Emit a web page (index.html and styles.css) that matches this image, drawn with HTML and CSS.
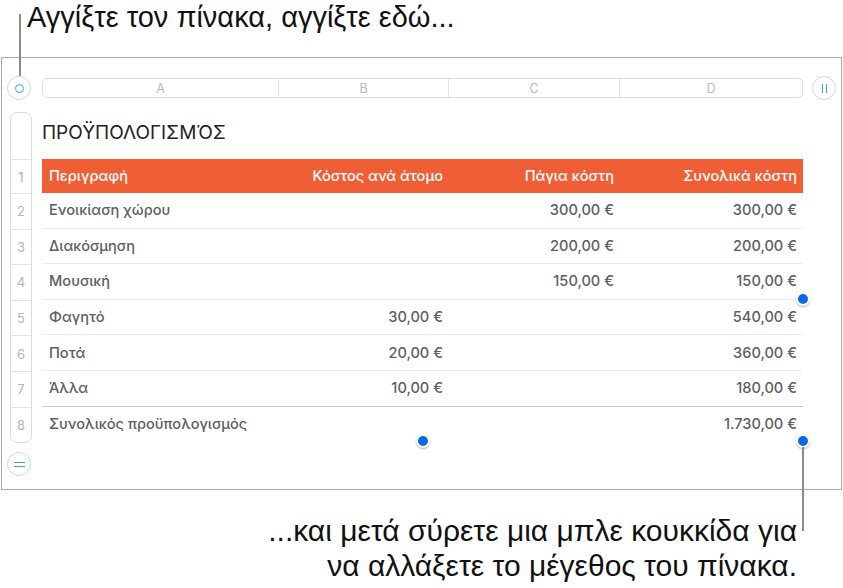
FILE: index.html
```html
<!DOCTYPE html>
<html lang="el">
<head>
<meta charset="utf-8">
<title>Πίνακας</title>
<link rel="stylesheet" href="styles.css">
</head>
<body>
<div class="page">
  <p class="caption caption-top">Αγγίξτε τον πίνακα, αγγίξτε εδώ...</p>

  <div class="frame">
    <div class="toolbar">
      <span class="circle-btn"><span class="ring"></span></span>
      <div class="colbar">
        <span class="colcell col-a">A</span>
        <span class="colcell col-b">B</span>
        <span class="colcell col-c">C</span>
        <span class="colcell col-d">D</span>
      </div>
      <span class="circle-btn"><span class="bars-v"></span></span>
    </div>

    <div class="sheet">
      <div class="rowbar">
        <span class="rowcell rowcell-top"></span>
        <span class="rowcell rowcell-head">1</span>
        <span class="rowcell">2</span>
        <span class="rowcell">3</span>
        <span class="rowcell">4</span>
        <span class="rowcell">5</span>
        <span class="rowcell">6</span>
        <span class="rowcell">7</span>
        <span class="rowcell">8</span>
      </div>

      <div class="tablewrap">
        <h2 class="title">ΠΡΟΫΠΟΛΟΓΙΣΜΌΣ</h2>
        <div class="grid">
          <div class="row head">
            <span class="cell left">Περιγραφή</span>
            <span class="cell">Κόστος ανά άτομο</span>
            <span class="cell">Πάγια κόστη</span>
            <span class="cell">Συνολικά κόστη</span>
          </div>
          <div class="row">
            <span class="cell left">Ενοικίαση χώρου</span>
            <span class="cell"></span>
            <span class="cell">300,00 €</span>
            <span class="cell">300,00 €</span>
          </div>
          <div class="row">
            <span class="cell left">Διακόσμηση</span>
            <span class="cell"></span>
            <span class="cell">200,00 €</span>
            <span class="cell">200,00 €</span>
          </div>
          <div class="row">
            <span class="cell left">Μουσική</span>
            <span class="cell"></span>
            <span class="cell">150,00 €</span>
            <span class="cell">150,00 €</span>
          </div>
          <div class="row">
            <span class="cell left">Φαγητό</span>
            <span class="cell">30,00 €</span>
            <span class="cell"></span>
            <span class="cell">540,00 €</span>
          </div>
          <div class="row">
            <span class="cell left">Ποτά</span>
            <span class="cell">20,00 €</span>
            <span class="cell"></span>
            <span class="cell">360,00 €</span>
          </div>
          <div class="row row-last-body">
            <span class="cell left">Άλλα</span>
            <span class="cell">10,00 €</span>
            <span class="cell"></span>
            <span class="cell">180,00 €</span>
          </div>
          <div class="row row-total">
            <span class="cell left">Συνολικός προϋπολογισμός</span>
            <span class="cell"></span>
            <span class="cell"></span>
            <span class="cell">1.730,00 €</span>
          </div>
        </div>

        <span class="dot dot-right-mid"></span>
        <span class="dot dot-bottom-mid"></span>
        <span class="dot dot-corner"></span>
      </div>
    </div>

    <span class="circle-btn add-row"><span class="bars-h"></span></span>
  </div>

  <p class="caption caption-bottom">...και μετά σύρετε μια μπλε κουκκίδα για<br>να αλλάξετε το μέγεθος του πίνακα.</p>

  <span class="leader leader-top"></span>
  <span class="leader leader-bottom"></span>
</div>
</body>
</html>
```

FILE: styles.css
```css
* { box-sizing: border-box; }

html, body {
  margin: 0;
  padding: 0;
  background: #ffffff;
}

.page {
  position: relative;
  width: 843px;
  height: 588px;
  overflow: hidden;
}

.caption {
  margin: 0;
  font-family: "Liberation Sans", Arial, sans-serif;
  font-size: 29px;
  color: #111111;
}

.caption-top {
  height: 57px;
  padding: 0 0 0 27px;
  line-height: 34px;
}

.caption-bottom {
  text-align: right;
  font-size: 30px;
  padding: 23px 46px 0 0;
  line-height: 35px;
}

.frame {
  margin-left: 1px;
  width: 841px;
  height: 433px;
  border: 1px solid #a9a9a9;
  padding-top: 18px;
  display: flex;
  flex-direction: column;
}

.toolbar {
  display: flex;
  align-items: center;
  height: 24px;
  padding-left: 5px;
}

.circle-btn {
  width: 24px;
  height: 24px;
  flex: none;
  border-radius: 50%;
  border: 1px solid #d6d6d6;
  background: #ffffff;
  display: flex;
  align-items: center;
  justify-content: center;
}

.ring {
  width: 9px;
  height: 9px;
  border-radius: 50%;
  border: 1.5px solid #3b9bf4;
}

.bars-v {
  width: 5px;
  height: 9px;
  border-left: 1.5px solid #3b9bf4;
  border-right: 1.5px solid #3b9bf4;
}

.bars-h {
  width: 11px;
  height: 5px;
  border-top: 1.5px solid #3b9bf4;
  border-bottom: 1.5px solid #3b9bf4;
}

.colbar {
  margin-left: 11px;
  margin-right: 9px;
  width: 761px;
  height: 20px;
  border: 1px solid #dcdcdc;
  border-radius: 5px;
  display: grid;
  grid-template-columns: 236px 170px 171px 1fr;
  font-family: "Inter", "Noto Sans", sans-serif;
  font-size: 12.5px;
  color: #b9b9b9;
}

.colcell {
  display: flex;
  align-items: center;
  justify-content: center;
  border-right: 1px solid #e2e2e2;
}

.colcell.col-d { border-right: none; }

.sheet {
  display: flex;
  margin-top: 12px;
  padding-left: 8px;
}

.rowbar {
  width: 22px;
  border: 1px solid #dcdcdc;
  border-radius: 7px;
  display: flex;
  flex-direction: column;
  font-family: "Inter", "Noto Sans", sans-serif;
  font-size: 13px;
  color: #b3b3b3;
}

.rowcell {
  height: 35.6px;
  border-top: 1px solid #e3e3e3;
  display: flex;
  align-items: center;
  justify-content: center;
}

.rowcell-top {
  height: 46px;
  border-top: none;
}

.rowcell-head { height: 34px; }

.tablewrap {
  position: relative;
  margin-left: 10px;
  width: 761px;
  font-family: "Inter", "Noto Sans", sans-serif;
  font-size: 14.6px;
  font-weight: 500;
}

.title {
  margin: 0;
  height: 47px;
  padding-top: 9px;
  font-family: "Inter", "Noto Sans", sans-serif;
  font-size: 19px;
  font-weight: 400;
  color: #222222;
}

.grid {
  display: flex;
  flex-direction: column;
}

.row {
  display: grid;
  grid-template-columns: 237px 170px 171px 183px;
  height: 35.6px;
  border-bottom: 1px solid #ececec;
  color: #5e5e5e;
}

.row.head {
  height: 34px;
  background: #f05e36;
  color: #ffffff;
  border-bottom: none;
}

.row.row-last-body { border-bottom-color: #cbcbcb; }

.row.row-total {
  border-bottom: none;
  align-items: start;
}

.cell {
  display: flex;
  align-items: center;
  justify-content: flex-end;
  padding: 0 6px 0 7px;
  white-space: nowrap;
}

.row.row-total .cell { height: 35px; }

.cell.left { justify-content: flex-start; }

.dot {
  position: absolute;
  width: 14px;
  height: 14px;
  border-radius: 50%;
  background: #0a6ae4;
  border: 2px solid #ffffff;
  box-shadow: 0 1px 2px rgba(0, 0, 0, 0.3);
}

.dot-right-mid { left: 754px; top: 180px; }
.dot-bottom-mid { left: 374px; top: 322px; }
.dot-corner { left: 754px; top: 322px; }

.add-row {
  margin: 9px 0 0 5px;
}

.leader {
  position: absolute;
  width: 2px;
  background: #8b8b8b;
}

.leader-top { left: 19px; top: 14px; height: 62px; }
.leader-bottom { left: 802px; top: 447px; height: 84px; }
```
